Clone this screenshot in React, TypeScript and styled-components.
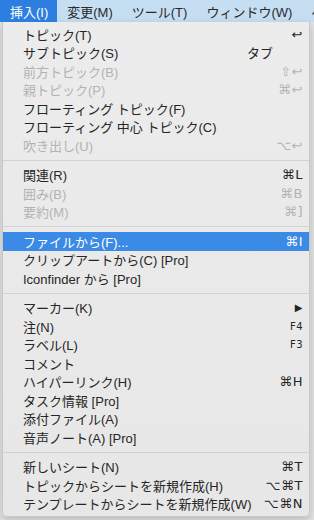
import React from "react";
import styled, { createGlobalStyle } from "styled-components";

const GlobalStyle = createGlobalStyle`
  html, body {
    margin: 0;
    padding: 0;
    background: #e2e2e2;
    font-family: "Liberation Sans", "Noto Sans CJK JP", sans-serif;
    -webkit-font-smoothing: antialiased;
  }
`;

const Screen = styled.div`
  width: 314px;
  height: 520px;
  overflow: hidden;
  position: relative;
`;

const MenuBar = styled.div`
  display: flex;
  height: 22px;
  background: #c6def2;
  white-space: nowrap;
  overflow: hidden;
`;

const BarItem = styled.div<{ $active?: boolean }>`
  display: flex;
  align-items: center;
  padding: 0 9px 0 10px;
  font-size: 13px;
  color: ${(p) => (p.$active ? "#ffffff" : "#2a2a2a")};
  background: ${(p) => (p.$active ? "#2c7fe0" : "transparent")};
`;

const Panel = styled.div`
  margin-left: 2px;
  width: 308px;
  height: 495px;
  box-sizing: border-box;
  padding: 3px 0;
  background: linear-gradient(#ececec, #e7e7e7);
  border: 1px solid #c9c9c9;
  border-top: none;
  border-radius: 0 0 5px 5px;
  box-shadow: 0 3px 8px rgba(0, 0, 0, 0.18);
  display: flex;
  flex-direction: column;
`;

const Row = styled.div<{ $disabled?: boolean; $active?: boolean }>`
  height: 18.5px;
  display: flex;
  align-items: center;
  padding: 0 6px 0 20px;
  font-size: 13px;
  color: ${(p) =>
    p.$active ? "#ffffff" : p.$disabled ? "#b3b3b3" : "#262626"};
  background: ${(p) => (p.$active ? "#3a8ae6" : "transparent")};
  white-space: nowrap;
`;

const Label = styled.span`
  flex: 1;
`;

const Shortcut = styled.span<{ $small?: boolean }>`
  font-family: "DejaVu Sans", "Liberation Sans", "Noto Sans CJK JP", sans-serif;
  font-size: ${(p) => (p.$small ? "10px" : "13px")};
  letter-spacing: 0.5px;
  text-align: right;
`;

const TabKey = styled.span`
  width: 56px;
  font-size: 13px;
`;

const Separator = styled.div`
  height: 11px;
  display: flex;
  align-items: center;
  &::after {
    content: "";
    flex: 1;
    height: 1px;
    background: #d2d2d2;
  }
`;

type Item =
  | { sep: true }
  | {
      sep?: false;
      label: string;
      key?: string;
      disabled?: boolean;
      active?: boolean;
      small?: boolean;
      tab?: boolean;
    };

const items: Item[] = [
  { label: "トピック(T)", key: "↩" },
  { label: "サブトピック(S)", key: "タブ", tab: true },
  { label: "前方トピック(B)", key: "⇧↩", disabled: true },
  { label: "親トピック(P)", key: "⌘↩", disabled: true },
  { label: "フローティング トピック(F)" },
  { label: "フローティング 中心 トピック(C)" },
  { label: "吹き出し(U)", key: "⌥↩", disabled: true },
  { sep: true },
  { label: "関連(R)", key: "⌘L" },
  { label: "囲み(B)", key: "⌘B", disabled: true },
  { label: "要約(M)", key: "⌘]", disabled: true },
  { sep: true },
  { label: "ファイルから(F)...", key: "⌘I", active: true },
  { label: "クリップアートから(C) [Pro]" },
  { label: "Iconfinder から [Pro]" },
  { sep: true },
  { label: "マーカー(K)", key: "▶", small: true },
  { label: "注(N)", key: "F4", small: true },
  { label: "ラベル(L)", key: "F3", small: true },
  { label: "コメント" },
  { label: "ハイパーリンク(H)", key: "⌘H" },
  { label: "タスク情報 [Pro]" },
  { label: "添付ファイル(A)" },
  { label: "音声ノート(A) [Pro]" },
  { sep: true },
  { label: "新しいシート(N)", key: "⌘T" },
  { label: "トピックからシートを新規作成(H)", key: "⌥⌘T" },
  { label: "テンプレートからシートを新規作成(W)", key: "⌥⌘N" },
];

export default function App() {
  return (
    <Screen>
      <GlobalStyle />
      <MenuBar>
        <BarItem $active>挿入(I)</BarItem>
        <BarItem>変更(M)</BarItem>
        <BarItem>ツール(T)</BarItem>
        <BarItem>ウィンドウ(W)</BarItem>
        <BarItem>ヘ</BarItem>
      </MenuBar>
      <Panel>
        {items.map((it, i) =>
          it.sep ? (
            <Separator key={i} />
          ) : (
            <Row key={i} $disabled={it.disabled} $active={it.active}>
              <Label>{it.label}</Label>
              {it.tab ? (
                <TabKey>{it.key}</TabKey>
              ) : (
                it.key && <Shortcut $small={it.small}>{it.key}</Shortcut>
              )}
            </Row>
          )
        )}
      </Panel>
    </Screen>
  );
}
